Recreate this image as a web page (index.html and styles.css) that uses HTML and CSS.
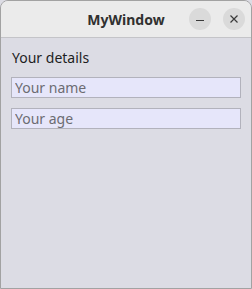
FILE: index.html
```html
<!DOCTYPE html>
<html lang="en">
<head>
    <meta charset="UTF-8">
    <meta name="viewport" content="width=device-width, initial-scale=1.0">
    <title>MyWindow</title>
    <link rel="stylesheet" href="styles.css">
</head>
<body>

<div class="window">
    <div class="titlebar">
        <span class="title">MyWindow</span>
        <div class="controls">
            <button class="control">
                <svg width="10" height="10" viewBox="0 0 10 10"><path d="M1 6.5 H9" stroke="#3a3a3a" stroke-width="1.2"/></svg>
            </button>
            <button class="control">
                <svg width="10" height="10" viewBox="0 0 10 10"><path d="M1.5 1.5 L8.5 8.5 M8.5 1.5 L1.5 8.5" stroke="#3a3a3a" stroke-width="1.2"/></svg>
            </button>
        </div>
    </div>
    <div class="content">
        <div class="label">Your details</div>
        <input type="text" class="field" placeholder="Your name">
        <input type="text" class="field" placeholder="Your age">
    </div>
</div>

</body>
</html>
```

FILE: styles.css
```css
body {
    margin: 0;
    font-family: "Noto Sans", "Open Sans", sans-serif;
    background-color: #dcdce4;
}
.window {
    width: 252px;
    height: 289px;
    box-sizing: border-box;
    border: 1px solid #a2a2a2;
    border-radius: 8px 8px 0 0;
    background-color: #dcdce4;
    display: flex;
    flex-direction: column;
    overflow: hidden;
}
.titlebar {
    position: relative;
    height: 36px;
    flex: none;
    background-color: #ebebeb;
    border-bottom: 1px solid #c4c4c8;
    display: flex;
    align-items: center;
    justify-content: center;
}
.title {
    font-size: 14px;
    font-weight: bold;
    color: #303030;
}
.controls {
    position: absolute;
    right: 6px;
    top: 7px;
    display: flex;
    gap: 12px;
}
.control {
    width: 22px;
    height: 22px;
    padding: 0;
    border: none;
    border-radius: 50%;
    background-color: #dadada;
    display: flex;
    align-items: center;
    justify-content: center;
}
.content {
    padding: 10px 10px 0 10px;
    display: flex;
    flex-direction: column;
}
.label {
    font-size: 14px;
    line-height: 20px;
    color: #1e1e1e;
    padding-left: 1px;
    margin-bottom: 9px;
}
.field {
    height: 21px;
    box-sizing: border-box;
    margin: 0 0 10px 0;
    padding: 0 3px;
    border: 1px solid #b2b2bc;
    background-color: #e6e6fa;
    font-family: inherit;
    font-size: 14px;
    color: #303030;
}
.field::placeholder {
    color: #6c6c72;
}
```
